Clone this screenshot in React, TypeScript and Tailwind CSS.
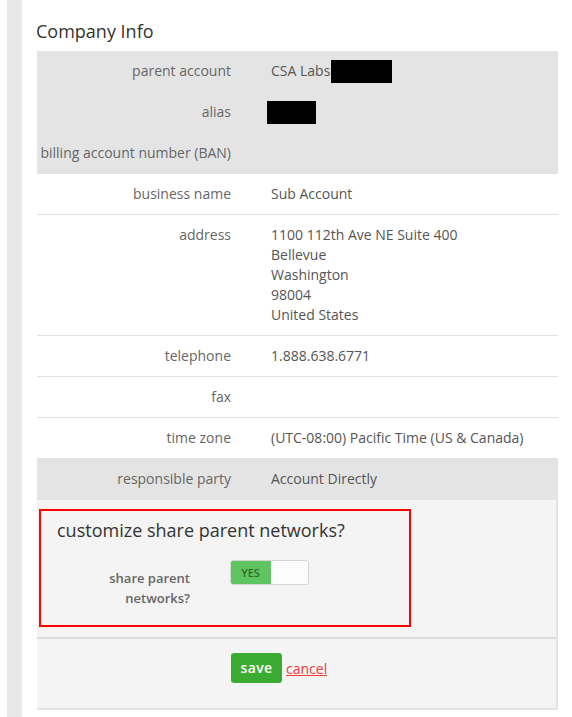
const rows = [
  { label: 'parent account', value: 'CSA Labs', redact: 'w-[61px] ml-[1px]', gray: true },
  { label: 'alias', value: '', redact: 'w-[49px] -ml-[8px]', gray: true },
  { label: 'billing account number (BAN)', value: '', gray: true },
  { label: 'business name', value: 'Sub Account' },
  {
    label: 'address',
    lines: ['1100 112th Ave NE Suite 400', 'Bellevue', 'Washington', '98004', 'United States'],
  },
  { label: 'telephone', value: '1.888.638.6771' },
  { label: 'fax', value: '' },
  { label: 'time zone', value: '(UTC-08:00) Pacific Time (US & Canada)' },
  { label: 'responsible party', value: 'Account Directly', gray: true },
]

export default function App() {
  return (
    <div className="min-h-[717px] bg-white font-['Open_Sans',sans-serif] flex">
      {/* left rail */}
      <div className="ml-[7px] w-[15px] bg-[#e8e8e8] self-stretch" />

      <div className="ml-[15px] w-[521px] pt-[19px]">
        <h2 className="text-[18px] leading-6 text-[#333] mb-[8px] -ml-[1px]">Company Info</h2>

        {/* info table */}
        <div className="text-[14px] leading-5">
          {rows.map((r) => (
            <div
              key={r.label}
              className={
                r.gray
                  ? 'flex bg-[#e4e4e4] border-b border-[#e4e4e4] py-[10px]'
                  : 'flex bg-white border-b border-[#e2e2e2] py-[10px]'
              }
            >
              <div className="w-[214px] pr-[20px] text-right text-[#666] shrink-0">{r.label}</div>
              <div className="pl-[20px] text-[#555] flex items-center h-full">
                {r.lines ? (
                  <div>
                    {r.lines.map((l) => (
                      <div key={l}>{l}</div>
                    ))}
                  </div>
                ) : (
                  <>
                    <span>{r.value || '\u00a0'}</span>
                    {r.redact && <span className={`inline-block h-[23px] -my-[2px] bg-black ${r.redact}`} />}
                  </>
                )}
              </div>
            </div>
          ))}
        </div>

        {/* share parent networks panel */}
        <div className="bg-[#f4f4f4] border-r-2 border-b-2 border-[#e4e4e4]">
          <div className="pt-[9px] px-[2px] pb-[10px] border-b-2 border-[#dcdcdc]">
            <div className="w-[372px] h-[118px] border-2 border-[#f00] pl-[16px] pt-[7px]">
              <h3 className="text-[18px] leading-6 text-[#333]">customize share parent networks?</h3>
              <div className="flex mt-[18px]">
                <div className="w-[133px] text-right text-[13px] leading-5 font-semibold text-[#666] pt-[8px]">
                  share parent
                  <br />
                  networks?
                </div>
                <div className="ml-[40px] flex h-[25px] w-[79px] rounded-[3px] overflow-hidden border border-[#d6d6d6]">
                  <div className="w-[41px] bg-[#5fc560] text-[11px] text-center text-[#2e6b2c] font-semibold -ml-[1px] -my-[1px] h-[25px] leading-[25px]">
                    YES
                  </div>
                  <div className="flex-1 bg-[#fcfcfc]" />
                </div>
              </div>
            </div>
          </div>
          <div className="flex items-center pl-[194px] pt-[14px] pb-[25px]">
            <button className="h-[30px] w-[51px] rounded-[3px] bg-[#3aab33] text-white text-[14px] font-semibold leading-[30px] tracking-wide">
              save
            </button>
            <a href="#" className="ml-[4px] text-[14px] text-[#ee3b3b] underline">
              cancel
            </a>
          </div>
        </div>
      </div>
    </div>
  )
}
